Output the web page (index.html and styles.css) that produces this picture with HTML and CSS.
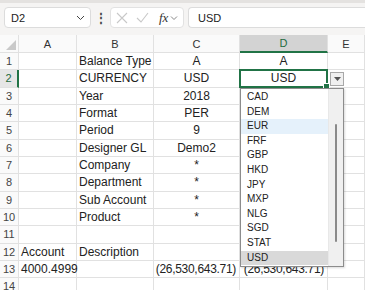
FILE: index.html
```html
<!DOCTYPE html>
<html lang="en">
<head>
    <meta charset="UTF-8">
    <title>Sheet - D2</title>
    <link rel="stylesheet" href="styles.css">
</head>
<body>
    <!-- Formula bar -->
    <div class="toolbar">
        <div class="name-box">
            <span>D2</span>
            <svg class="chev" width="9" height="6" viewBox="0 0 9 6"><path d="M1 1l3.5 3.5L8 1" fill="none" stroke="#444" stroke-width="1"/></svg>
        </div>
        <div class="dots">⋮</div>
        <div class="fx-box">
            <svg width="12" height="12" viewBox="0 0 12 12"><path d="M1 1l10 10M11 1L1 11" stroke="#c8c8c8" stroke-width="1.1"/></svg>
            <svg width="13" height="12" viewBox="0 0 13 12"><path d="M1 6l4 4 7-9" fill="none" stroke="#c8c8c8" stroke-width="1.1"/></svg>
            <span class="fx">fx</span>
            <svg width="8" height="6" viewBox="0 0 8 6"><path d="M1 1.5l3 3 3-3" fill="none" stroke="#888" stroke-width="1"/></svg>
        </div>
        <div class="formula">USD</div>
    </div>

    <!-- Grid -->
    <div class="sheet">
        <div class="grid">
            <div class="corner"><svg width="10" height="10" viewBox="0 0 10 10"><path d="M10 0V10H0z" fill="#c9c9c9"/></svg></div>
            <div class="colhead">A</div>
            <div class="colhead">B</div>
            <div class="colhead">C</div>
            <div class="colhead sel">D</div>
            <div class="colhead">E</div>

            <div class="rowhead">1</div><div class="c"></div><div class="c">Balance Type</div><div class="c mid">A</div><div class="c mid">A</div><div class="c"></div>
            <div class="rowhead sel">2</div><div class="c"></div><div class="c">CURRENCY</div><div class="c mid">USD</div><div class="c mid active">USD</div><div class="c"></div>
            <div class="rowhead">3</div><div class="c"></div><div class="c">Year</div><div class="c mid">2018</div><div class="c"></div><div class="c"></div>
            <div class="rowhead">4</div><div class="c"></div><div class="c">Format</div><div class="c mid">PER</div><div class="c"></div><div class="c"></div>
            <div class="rowhead">5</div><div class="c"></div><div class="c">Period</div><div class="c mid">9</div><div class="c"></div><div class="c"></div>
            <div class="rowhead">6</div><div class="c"></div><div class="c">Designer GL</div><div class="c mid">Demo2</div><div class="c"></div><div class="c"></div>
            <div class="rowhead">7</div><div class="c"></div><div class="c">Company</div><div class="c mid">*</div><div class="c"></div><div class="c"></div>
            <div class="rowhead">8</div><div class="c"></div><div class="c">Department</div><div class="c mid">*</div><div class="c"></div><div class="c"></div>
            <div class="rowhead">9</div><div class="c"></div><div class="c">Sub Account</div><div class="c mid">*</div><div class="c"></div><div class="c"></div>
            <div class="rowhead">10</div><div class="c"></div><div class="c">Product</div><div class="c mid">*</div><div class="c"></div><div class="c"></div>
            <div class="rowhead">11</div><div class="c"></div><div class="c"></div><div class="c"></div><div class="c"></div><div class="c"></div>
            <div class="rowhead">12</div><div class="c">Account</div><div class="c">Description</div><div class="c"></div><div class="c"></div><div class="c"></div>
            <div class="rowhead">13</div><div class="c">4000.4999</div><div class="c"></div><div class="c num">(26,530,643.71)</div><div class="c num">(26,530,643.71)</div><div class="c"></div>
            <div class="rowhead">14</div><div class="c"></div><div class="c"></div><div class="c"></div><div class="c"></div><div class="c"></div>
        </div>

        <!-- Validation dropdown -->
        <div class="dd-btn"><svg width="7" height="4" viewBox="0 0 7 4"><path d="M0 0h7L3.5 4z" fill="#555"/></svg></div>
        <div class="dd-list">
            <ul class="dd-items">
                <li>CAD</li>
                <li>DEM</li>
                <li class="hover">EUR</li>
                <li>FRF</li>
                <li>GBP</li>
                <li>HKD</li>
                <li>JPY</li>
                <li>MXP</li>
                <li>NLG</li>
                <li>SGD</li>
                <li>STAT</li>
                <li class="picked">USD</li>
            </ul>
            <div class="dd-scroll"><div class="thumb"></div></div>
        </div>
    </div>
</body>
</html>
```

FILE: styles.css
```css
* {
    margin: 0;
    padding: 0;
    box-sizing: border-box;
}

body {
    font-family: "Liberation Sans", Arial, sans-serif;
    background: #fff;
    color: #222;
    width: 365px;
    height: 290px;
    overflow: hidden;
}

/* Formula bar */
.toolbar {
    height: 35px;
    background: #f5f4f3;
    border-top: 3px solid #e4e2e0;
    display: flex;
    align-items: center;
    padding: 1px 0 4px 4px;
}

.name-box {
    width: 87px;
    height: 21px;
    background: #fff;
    border: 1px solid #dcdcdc;
    border-radius: 4px;
    display: flex;
    align-items: center;
    justify-content: space-between;
    padding: 0 5px 0 6px;
    font-size: 11px;
}

.dots {
    width: 19px;
    text-align: center;
    font-size: 12px;
    font-weight: bold;
    color: #444;
}

.fx-box {
    width: 74px;
    height: 21px;
    background: #fff;
    border: 1px solid #e2e2e2;
    border-radius: 4px;
    display: flex;
    align-items: center;
    gap: 8px;
    padding: 0 3px 0 5px;
}

.fx-box .fx {
    font-family: "Liberation Serif", serif;
    font-style: italic;
    font-size: 13px;
    color: #333;
    margin-left: 2px;
    margin-right: -6px;
}

.formula {
    flex: 1;
    height: 21px;
    margin-left: 4px;
    background: #fff;
    border: 1px solid #dcdcdc;
    border-right: none;
    border-radius: 4px 0 0 4px;
    display: flex;
    align-items: center;
    padding-left: 9px;
    font-size: 11px;
}

/* Sheet grid */
.sheet {
    position: relative;
}

.grid {
    display: grid;
    grid-template-columns: 19px 58px 77px 86px 88px 37px;
    grid-template-rows: 18px;
    grid-auto-rows: 17.33px;
    font-size: 12px;
}

.grid > div {
    border-right: 1px solid #e1e1e1;
    border-bottom: 1px solid #e1e1e1;
    display: flex;
    align-items: center;
    white-space: nowrap;
    overflow: visible;
}

.corner {
    background: #fafafa;
    justify-content: flex-end;
    align-items: flex-end !important;
    padding: 0 2px 2px 0;
}

.colhead {
    background: #fafafa;
    justify-content: center;
    font-size: 11px;
    color: #333;
}

.colhead.sel {
    background: #d3d3d3;
    color: #1e6b40;
    border-bottom: 2px solid #217346 !important;
}

.rowhead {
    background: #fafafa;
    justify-content: center;
    font-size: 11px;
    color: #444;
}

.rowhead.sel {
    background: #e6e6e6;
    color: #1e6b40;
    border-right: 2px solid #217346 !important;
}

.c {
    padding: 0 2px;
}

.c.mid {
    justify-content: center;
}

.c.num {
    justify-content: flex-end;
    padding-right: 3px;
    letter-spacing: -0.3px;
}

.c.active {
    border: 2px solid #217346 !important;
    margin: -1px 0 0 -1px;
    position: relative;
}

.c.active::after {
    content: "";
    position: absolute;
    right: -4px;
    bottom: -4px;
    width: 5px;
    height: 5px;
    background: #217346;
    border: 1px solid #fff;
}

/* Validation dropdown */
.dd-btn {
    position: absolute;
    left: 330px;
    top: 37px;
    width: 14px;
    height: 14px;
    background: #f0f0f0;
    border: 1px solid #a8a8a8;
    display: flex;
    align-items: center;
    justify-content: center;
}

.dd-list {
    position: absolute;
    left: 240px;
    top: 53px;
    width: 104px;
    height: 179px;
    background: #fff;
    border: 1px solid #8c8c8c;
    box-shadow: 1px 1px 2px rgba(0, 0, 0, 0.15);
    display: flex;
}

.dd-items {
    list-style: none;
    flex: 1;
    padding-top: 1px;
}

.dd-items li {
    height: 14.6px;
    line-height: 14.6px;
    padding-left: 6px;
    font-size: 10px;
    color: #222;
}

.dd-items li.hover {
    background: #e5f1fb;
}

.dd-items li.picked {
    background: #d9d9d9;
}

.dd-scroll {
    width: 15px;
    background: #f0f0f0;
    border-left: 1px solid #e8e8e8;
    position: relative;
}

.thumb {
    position: absolute;
    left: 6px;
    top: 35px;
    width: 2px;
    height: 118px;
    background: #8a8a8a;
    border-radius: 1px;
}
```
